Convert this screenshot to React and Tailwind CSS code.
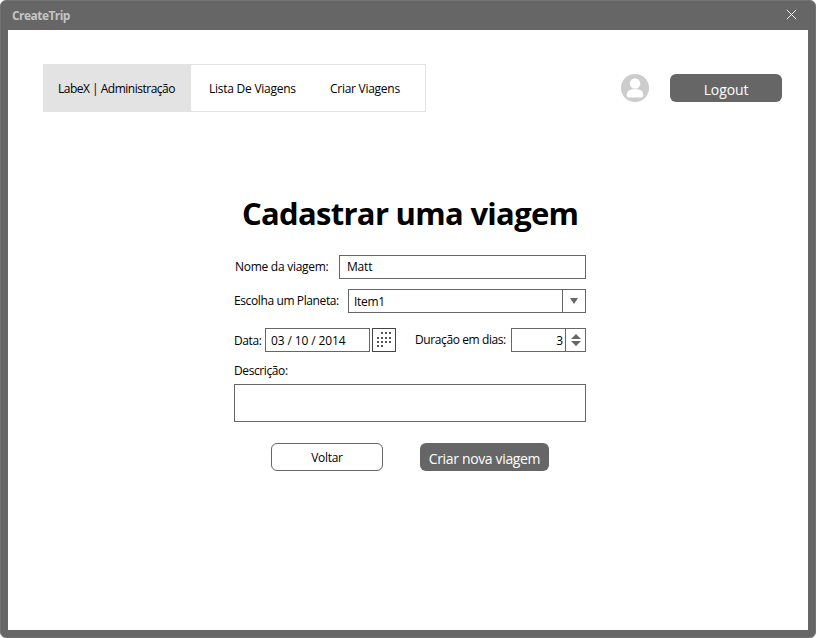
import React from 'react';

function UserAvatar() {
  return (
    <svg className="block h-7 w-7" viewBox="0 0 28 28">
      <circle cx="14" cy="14" r="14" fill="#cccccc" />
      <circle cx="14" cy="9.5" r="5.2" fill="#fff" />
      <path d="M5.7 21.2c0-4 3-6 6.300-6h4c3.300 0 6.300 2 6.300 6 0 1.500-.8 2.400-2 2.400H7.700c-1.200 0-2-.9-2-2.400z" fill="#fff" />
    </svg>
  );
}

function CalendarDots() {
  const rows = [[1, 2, 3], [0, 1, 2, 3], [0, 1, 2, 3], [0, 1]];
  const tops = [3, 8, 12, 16];
  return (
    <svg className="block h-[22px] w-[22px]" viewBox="0 0 22 22" shapeRendering="crispEdges">
      {rows.map((cols, r) =>
        cols.map((c) => <rect key={`${r}-${c}`} x={4 + c * 4} y={tops[r]} width="2" height="2" fill="#555" />)
      )}
    </svg>
  );
}

function Label({ className = '', children }) {
  return <label className={`block shrink-0 whitespace-nowrap leading-4 ${className}`}>{children}</label>;
}

export default function App() {
  return (
    <div className="h-[638px] w-[816px] overflow-hidden bg-white font-['Open_Sans','Noto_Sans',sans-serif] text-[12px] text-black">
      <div className="flex h-full flex-col rounded-[6px] border border-[#727272] bg-[#666] px-[7px] pb-[7px]">
        <header className="flex h-[29px] shrink-0 justify-between pl-1 pr-[11px]">
          <span className="mt-[7px] text-[12px] font-bold leading-4 tracking-[-0.55px] text-[#c4c4c4]">CreateTrip</span>
          <svg className="mt-[8px] h-[11px] w-[11px]" viewBox="0 0 11 11">
            <path d="M.8.8l9.400 9.400M10.200.8L.8 10.200" stroke="#fff" strokeWidth="0.9" />
          </svg>
        </header>
        <main className="flex grow flex-col bg-white">
          <div className="flex pl-[35px] pr-[26px] pt-[34px]">
            <nav className="flex h-12 w-[383px] items-center border border-[#e3e3e3] leading-4">
              <a className="-my-px -ml-px flex h-12 w-[148px] items-center whitespace-nowrap bg-[#e3e3e3] pl-[15px] pt-[2px] tracking-[-0.5px]">LabeX | Administração</a>
              <a className="ml-[18px] w-[121px] whitespace-nowrap pt-[2px] tracking-[-0.25px]">Lista De Viagens</a>
              <a className="whitespace-nowrap pt-[2px] tracking-[-0.27px]">Criar Viagens</a>
            </nav>
            <div className="ml-auto flex h-7 gap-[21px] pt-[10px]">
              <UserAvatar />
              <button className="flex h-7 w-[112px] items-center justify-center rounded-[6px] bg-[#666] pt-[2px] text-[14px] tracking-[-0.1px] text-white">Logout</button>
            </div>
          </div>

          <form className="ml-[226px] mt-[79px] flex w-[352px] flex-col">
            <h1 className="ml-[8px] whitespace-nowrap text-[31px] font-bold leading-[44px] tracking-[-0.7px]">Cadastrar uma viagem</h1>
            <div className="mt-[20px] flex h-6 items-center">
              <Label className="w-[105px] pl-px tracking-[-0.27px]">Nome da viagem:</Label>
              <div className="flex h-6 grow items-center border border-[#666] pl-[7px] tracking-[-0.2px]">Matt</div>
            </div>
            <div className="mt-[10px] flex h-6 items-center">
              <Label className="w-[114px] tracking-[-0.39px]">Escolha um Planeta:</Label>
              <div className="flex h-6 grow border border-[#666]">
                <span className="grow pl-[5px] pt-[2px] leading-5 tracking-[-0.3px]">Item1</span>
                <span className="flex w-[23px] items-center justify-center border-l border-[#666]">
                  <svg className="h-[6px] w-[8px]" viewBox="0 0 8 6"><path d="M0 0h8L4 6z" fill="#666" /></svg>
                </span>
              </div>
            </div>
            <div className="mt-[15px] flex h-6 items-center">
              <Label className="w-[31px] pt-px tracking-[-0.4px]">Data:</Label>
              <div className="h-6 w-[105px] shrink-0 border border-[#666] pl-[5px] pt-[2px] leading-5 tracking-[-0.12px]">03 / 10 / 2014</div>
              <div className="ml-[2px] h-6 w-6 shrink-0 border border-[#444]"><CalendarDots /></div>
              <Label className="ml-[19px] w-[96px] tracking-[-0.4px]">Duração em dias:</Label>
              <div className="flex h-6 w-[75px] shrink-0 border border-[#666]">
                <span className="grow pr-[2px] pt-[2px] text-right leading-5">3</span>
                <span className="flex w-5 items-center justify-center border-l border-[#666]">
                  <svg className="h-3 w-[10px]" viewBox="0 0 10 12"><path d="M0 5h10L5 0zM0 7h10L5 12z" fill="#666" /></svg>
                </span>
              </div>
            </div>
            <Label className="mt-[11px] tracking-[-0.4px]">Descrição:</Label>
            <div className="mt-[5px] h-[38px] border border-[#666]" />
            <div className="mt-[21px] flex gap-[37px] pl-[37px]">
              <button type="button" className="flex h-7 w-[112px] items-center justify-center rounded-[6px] border border-[#666] pt-px tracking-[-0.3px]">Voltar</button>
              <button type="button" className="flex h-7 w-[129px] items-center justify-center whitespace-nowrap rounded-[6px] bg-[#666] pt-[2px] text-[14px] tracking-[-0.35px] text-white">Criar nova viagem</button>
            </div>
          </form>
        </main>
      </div>
    </div>
  );
}
